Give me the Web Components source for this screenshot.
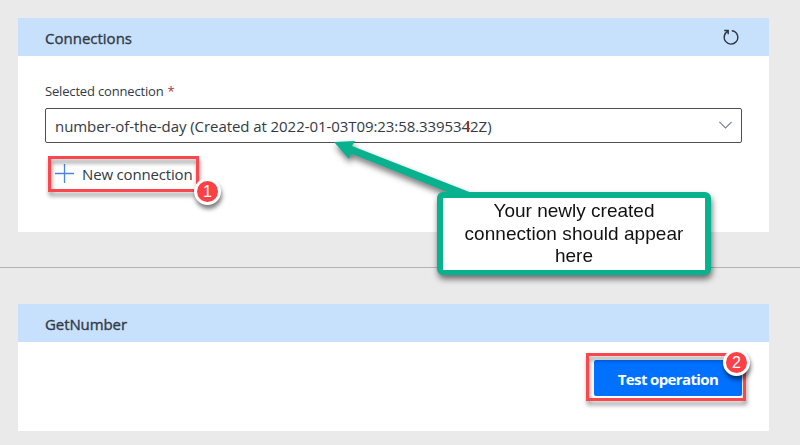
<!DOCTYPE html>
<html lang="en">
<head>
<meta charset="utf-8">
<title>Test operation</title>
<style>
html,body{margin:0;height:100%;overflow:hidden}
body{background:#eaeaea;color:#323a45;font-family:"Open Sans","Noto Sans",sans-serif}
</style>
</head>
<body>
<test-page></test-page>
<script>
const define = (name, html, ready) => {
  const t = document.createElement('template');
  t.innerHTML = html;
  customElements.define(name, class extends HTMLElement {
    connectedCallback() {
      if (this.shadowRoot) return;
      this.attachShadow({mode: 'open'}).append(t.content.cloneNode(true));
      if (ready) ready(this);
    }
  });
};

// Text run whose tracking is adjusted to fill the requested width.
define('fit-text', `<style>:host{display:inline-block;white-space:nowrap;flex:none}span{display:inline-block}</style><span><slot></slot></span>`, el => {
  const want = +el.getAttribute('width');
  const s = el.shadowRoot.querySelector('span');
  const n = el.textContent.length;
  s.style.letterSpacing = ((want - s.getBoundingClientRect().width) / n) + 'px';
});

define('info-card', `<style>
:host{display:flex;flex-direction:column;box-sizing:border-box;background:#fff}
header{height:38px;box-sizing:border-box;padding:1px 30px 0 27px;display:flex;align-items:center;justify-content:space-between;background:#c7e1fd;font-size:15px;font-weight:500;line-height:20px;-webkit-text-stroke:.35px #323a45}
section{flex:1;display:flex;flex-direction:column;padding:0 27px}
</style><header><slot name="title"></slot><slot name="action"></slot></header><section><slot></slot></section>`);

define('refresh-icon', `<style>:host{display:block;width:16px;height:16px;margin-top:-2px}svg{display:block}</style>
<svg width="16" height="16" viewBox="0 0 16 16" fill="none" stroke="#2b3440" stroke-width="1.4"><path d="M8.8 1.8C9.6 1.8 10.6 2 11.4 2.4A6.8 6.8 0 1 1 5 2.2M1.2 1.5H5.2V5.2M5 1.8 2.6 4"/></svg>`);

define('select-box', `<style>
:host{display:flex;box-sizing:border-box;height:35px;border:1px solid #505050;border-radius:2px;padding:0 9px;align-items:center;justify-content:space-between;font-size:15px;line-height:20px}
svg{display:block;margin-top:-1px}
</style><slot></slot><svg width="13" height="8" viewBox="0 0 13 8" fill="none" stroke="#75818b" stroke-width="1.1"><path d="M.4.8 6.5 6.9 12.6.8"/></svg>`);

define('new-connection', `<style>
:host{display:flex;align-items:center;gap:8px;height:24px;margin:19px 0 0 10px;font-size:15px;line-height:20px}
svg{display:block;margin-top:-2px}
</style><svg width="19" height="19" viewBox="0 0 19 19" stroke="#4d83e6" stroke-width="1.3"><path d="M0 9.5H19M9.5 0V19"/></svg><slot></slot>`);

define('primary-button', `<style>
:host{display:flex;box-sizing:border-box;width:148px;height:36px;align-items:center;justify-content:center;align-self:flex-end;margin-top:18px;padding-top:1px;background:#0070ff;border-radius:2px;color:#fff;font-size:15px;font-weight:700;line-height:20px}
</style><slot></slot>`);

define('mark-frame', `<style>
:host{position:absolute;box-sizing:border-box;border:3px solid #f9474d;filter:drop-shadow(1px 4px 2px rgba(0,0,0,.42))}
</style>`);

define('step-badge', `<style>
:host{position:absolute;box-sizing:border-box;width:27px;height:27px;border:3px solid #fff;border-radius:50%;background:#fb4146;color:#fff;display:flex;align-items:center;justify-content:center;font:16px/20px "Liberation Sans",Arial,sans-serif;box-shadow:1px 4px 4px rgba(0,0,0,.5)}
</style><slot></slot>`);

define('note-callout', `<style>
:host{position:absolute;left:0;top:0;width:800px;height:445px;filter:drop-shadow(1px 4px 3px rgba(0,0,0,.55))}
svg{position:absolute;left:0;top:0}
div{position:absolute;left:437px;top:192px;width:274px;height:83px;box-sizing:border-box;border:6px solid #08b28f;border-bottom-width:5px;border-radius:6px;background:#fff;color:#111;display:flex;flex-direction:column;align-items:center;padding-top:2px;font:19px/22.5px "Liberation Sans",Arial,sans-serif}
</style><svg width="800" height="445" fill="#08b28f"><path d="M334 142 355 141 352 146 477 195H455L351 153.5 349 159Z"/></svg><div><slot></slot></div>`);

define('test-page', `<style>
:host{display:flex;flex-direction:column;position:relative;width:800px;height:445px;box-sizing:border-box;padding-top:18px;background:#eaeaea;overflow:hidden}
info-card{width:751px;margin-left:18px;flex:none}
.first{height:214px}
.second{height:127px}
hr{width:100%;height:1px;border:0;margin:35px 0 36px;background:#b4b4b4;flex:none}
.label{display:flex;gap:4px;margin-top:25px;height:27px;box-sizing:border-box;font-size:13px;line-height:20px}
.req{color:#a4373a}
.digit{position:absolute;left:467px;top:121px;width:2px;height:11px;background:#a02d32}
</style>
<info-card class="first">
<fit-text slot="title" width="87">Connections</fit-text><refresh-icon slot="action"></refresh-icon>
<div class="label"><fit-text width="118.5">Selected connection</fit-text><span class="req">*</span></div>
<select-box><fit-text width="436.5">number-of-the-day (Created at 2022-01-03T09:23:58.3395342Z)</fit-text></select-box>
<new-connection><fit-text width="110.5">New connection</fit-text></new-connection>
</info-card>
<hr>
<info-card class="second">
<fit-text slot="title" width="82">GetNumber</fit-text>
<primary-button><fit-text width="100.5">Test operation</fit-text></primary-button>
</info-card>
<i class="digit"></i>
<mark-frame style="left:48px;top:156px;width:151px;height:36px"></mark-frame>
<step-badge style="left:194px;top:178px">1</step-badge>
<mark-frame style="left:586px;top:353px;width:160px;height:48px"></mark-frame>
<step-badge style="left:723px;top:349px">2</step-badge>
<note-callout><fit-text width="161">Your newly created</fit-text><fit-text width="219">connection should appear</fit-text><fit-text width="38">here</fit-text></note-callout>`);
</script>
</body>
</html>
